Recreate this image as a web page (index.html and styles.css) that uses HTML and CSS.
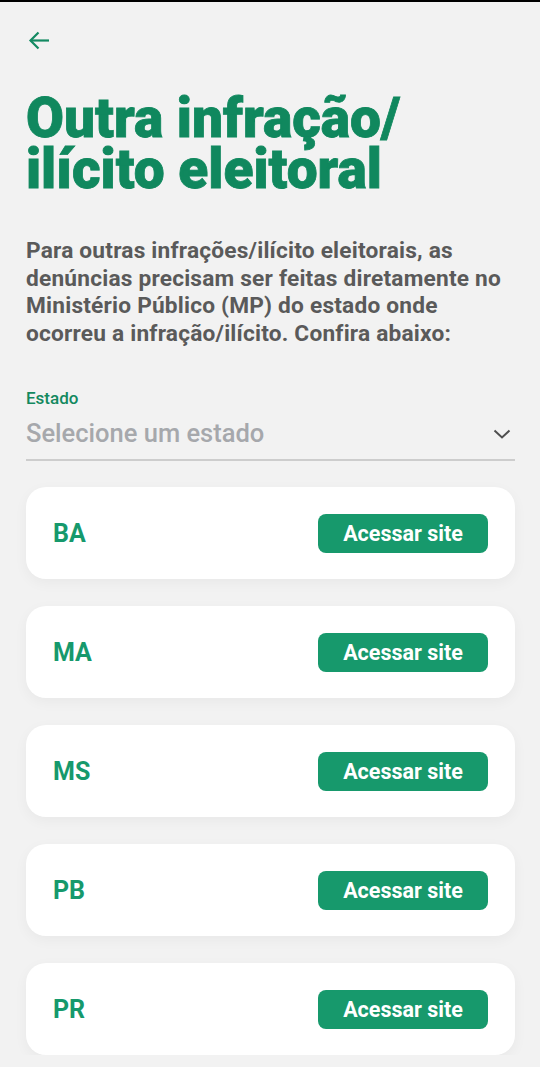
FILE: index.html
```html
<!doctype html>
<html lang="pt-BR">
<head>
    <meta charset="utf-8" />
    <meta name="viewport" content="width=device-width,initial-scale=1" />
    <title>Outra infração/ilícito eleitoral</title>
    <link rel="stylesheet" href="styles.css">
</head>
<body>
    <div class="page">
        <button class="back" type="button" aria-label="Voltar">
            <svg width="22" height="20" viewBox="0 0 22 20" fill="none" stroke="currentColor" stroke-width="2.2">
                <path d="M21 9.5H2.5" />
                <path d="M10.5 1.5L2.5 9.5L10.5 17.5" />
            </svg>
        </button>

        <h1 class="title">Outra infração/ ilícito eleitoral</h1>

        <p class="intro">Para outras infrações/ilícito eleitorais, as denúncias precisam ser feitas diretamente no Ministério Público (MP) do estado onde ocorreu a infração/ilícito. Confira abaixo:</p>

        <label class="field-label" for="estado">Estado</label>
        <div class="select" id="estado">
            <span class="placeholder">Selecione um estado</span>
            <svg width="18" height="10" viewBox="0 0 18 10" fill="none" stroke="currentColor" stroke-width="2">
                <path d="M1.5 1.5L9 8.5L16.5 1.5" />
            </svg>
        </div>

        <ul class="list">
            <li class="card"><span class="uf">BA</span><a class="btn" href="#">Acessar site</a></li>
            <li class="card"><span class="uf">MA</span><a class="btn" href="#">Acessar site</a></li>
            <li class="card"><span class="uf">MS</span><a class="btn" href="#">Acessar site</a></li>
            <li class="card"><span class="uf">PB</span><a class="btn" href="#">Acessar site</a></li>
            <li class="card"><span class="uf">PR</span><a class="btn" href="#">Acessar site</a></li>
        </ul>
    </div>
</body>
</html>
```

FILE: styles.css
```css
body { margin:0; background:#f2f2f2; font-family: Roboto, "Noto Sans", Arial, sans-serif; border-top:2px solid #000; }
.page { padding:0 25px 0 26px; }

.back { display:block; border:0; background:none; padding:0; margin:29px 0 0 2px; color:#138a62; width:22px; height:20px; cursor:pointer; }
.back svg { display:block; }

.title { margin:42px 0 0; font-size:55px; line-height:51px; font-weight:900; color:#10885e; -webkit-text-stroke:0.8px #10885e; width:420px; }

.intro { margin:42px 0 0; font-size:22.7px; line-height:27.5px; font-weight:700; letter-spacing:0.2px; color:#5a5a5a; }

.field-label { display:block; margin-top:41px; font-size:17px; line-height:20px; font-weight:500; color:#13895f; }
.select { display:flex; align-items:center; justify-content:space-between; margin-top:10px; padding:0 4px 11px 0; border-bottom:2px solid #cdcdcd; }
.placeholder { font-size:25.5px; line-height:30px; font-weight:500; color:#a6a8ac; }
.select svg { color:#4f4f4f; margin-top:2px; }

.list { list-style:none; margin:26px 0 0; padding:0; display:flex; flex-direction:column; gap:27px; }
.card { display:flex; align-items:center; justify-content:space-between; height:92px; box-sizing:border-box; padding:0 27px; background:#fff; border-radius:20px; box-shadow:0 4px 14px rgba(0,0,0,0.045); }
.uf { font-size:25px; font-weight:700; color:#16996c; }
.btn { display:flex; align-items:center; justify-content:center; width:170px; height:39px; border-radius:8px; background:#17996c; color:#fff; text-decoration:none; font-size:21.5px; font-weight:700; }
```
